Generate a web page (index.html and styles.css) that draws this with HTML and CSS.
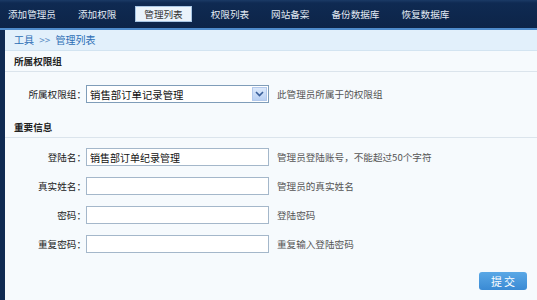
FILE: index.html
```html
<!DOCTYPE html>
<html>
<head>
  <title>管理列表</title>
  <meta charset="UTF-8">
  <link rel="stylesheet" href="styles.css">
</head>
<body>
  <div class="nav">
    <a href="#">添加管理员</a>
    <a href="#">添加权限</a>
    <a href="#" class="active">管理列表</a>
    <a href="#">权限列表</a>
    <a href="#">网站备案</a>
    <a href="#">备份数据库</a>
    <a href="#">恢复数据库</a>
  </div>
  <div class="main">
    <div class="crumb">工具 <span class="sep">&gt;&gt;</span> 管理列表</div>

    <div class="section-title">所属权限组</div>
    <div class="group first">
      <div class="row">
        <label>所属权限组：</label>
        <div class="select">
          <span class="select-text">销售部订单记录管理</span>
          <span class="select-btn">
            <svg width="9" height="6" viewBox="0 0 9 6"><path d="M1 1 L4.5 4.5 L8 1" fill="none" stroke="#3a5f9a" stroke-width="1.6"/></svg>
          </span>
        </div>
        <span class="help">此管理员所属于的权限组</span>
      </div>
    </div>

    <div class="section-title">重要信息</div>
    <div class="group">
      <div class="row">
        <label for="username">登陆名：</label>
        <input type="text" id="username" value="销售部订单纪录管理">
        <span class="help">管理员登陆账号，不能超过50个字符</span>
      </div>
      <div class="row">
        <label for="realname">真实姓名：</label>
        <input type="text" id="realname">
        <span class="help">管理员的真实姓名</span>
      </div>
      <div class="row">
        <label for="pwd">密码：</label>
        <input type="password" id="pwd">
        <span class="help">登陆密码</span>
      </div>
      <div class="row">
        <label for="pwd2">重复密码：</label>
        <input type="password" id="pwd2">
        <span class="help">重复输入登陆密码</span>
      </div>
      <div class="actions">
        <button type="submit">提交</button>
      </div>
    </div>
  </div>
</body>
</html>
```

FILE: styles.css
```css
html, body { height: 100%; }
body { margin: 0; font-family: "Noto Sans CJK SC", "DejaVu Sans", sans-serif; font-size: 9.6px; color: #222; background: #0f2a52; }

.nav { display: flex; align-items: center; gap: 22px; height: 28px; padding-left: 8px; background: linear-gradient(#1b3a66, #0f2a52 3px, #0d2448); border-bottom: 2px solid #4f8bcb; }
.nav a { color: #e3ebf5; text-decoration: none; line-height: 14px; }
.nav a.active { color: #333; background: #eaf3fb; border: 1px solid #a9c6e4; padding: 0 8px; margin: 0 -3px; }

.main { margin-left: 5px; background: #f6fafd; height: calc(100% - 30px); }
.crumb { height: 20px; line-height: 20px; padding-left: 9px; font-size: 10px; color: #2b6db5; background: #e2f0fb; border-bottom: 1px solid #d3e4f1; }
.crumb .sep { margin: 0 3px; color: #5a8cc4; }

.section-title { height: 20px; line-height: 20px; padding-left: 9px; font-weight: bold; color: #222; border-bottom: 1px solid #dbe4ec; }
.group { padding: 10px 10px 0 0; }
.group.first { padding: 13px 0 14px; }

.row { display: flex; align-items: center; height: 18px; margin-bottom: 11px; }
.group.first .row { margin-bottom: 0; }
.row label { width: 81px; text-align: right; flex-shrink: 0; color: #222; }
.row input { width: 183px; height: 18px; box-sizing: border-box; margin: 0; padding: 0 3px; border: 1px solid #a4b7ca; background: #fff; font: inherit; color: #111; font-size: 10px; }
.help { margin-left: 8px; color: #555; }

.select { display: flex; align-items: center; width: 183px; height: 18px; box-sizing: border-box; border: 1px solid #7f9db9; background: #fff; }
.select-text { flex: 1; padding-left: 3px; font-size: 10.4px; color: #111; }
.select-btn { display: flex; align-items: center; justify-content: center; width: 15px; height: 14px; margin-right: 1px; background: linear-gradient(#dce9fb, #b9d0f3); border: 1px solid #b3c9ec; box-sizing: border-box; }

.actions { display: flex; justify-content: flex-end; padding-top: 8px; }
button { width: 48px; height: 18px; border: none; border-radius: 3px; background: linear-gradient(#5aa8e6, #3a8ad4); color: #fff; font: inherit; font-size: 11px; letter-spacing: 2px; padding: 0 0 0 2px; cursor: pointer; }
```
